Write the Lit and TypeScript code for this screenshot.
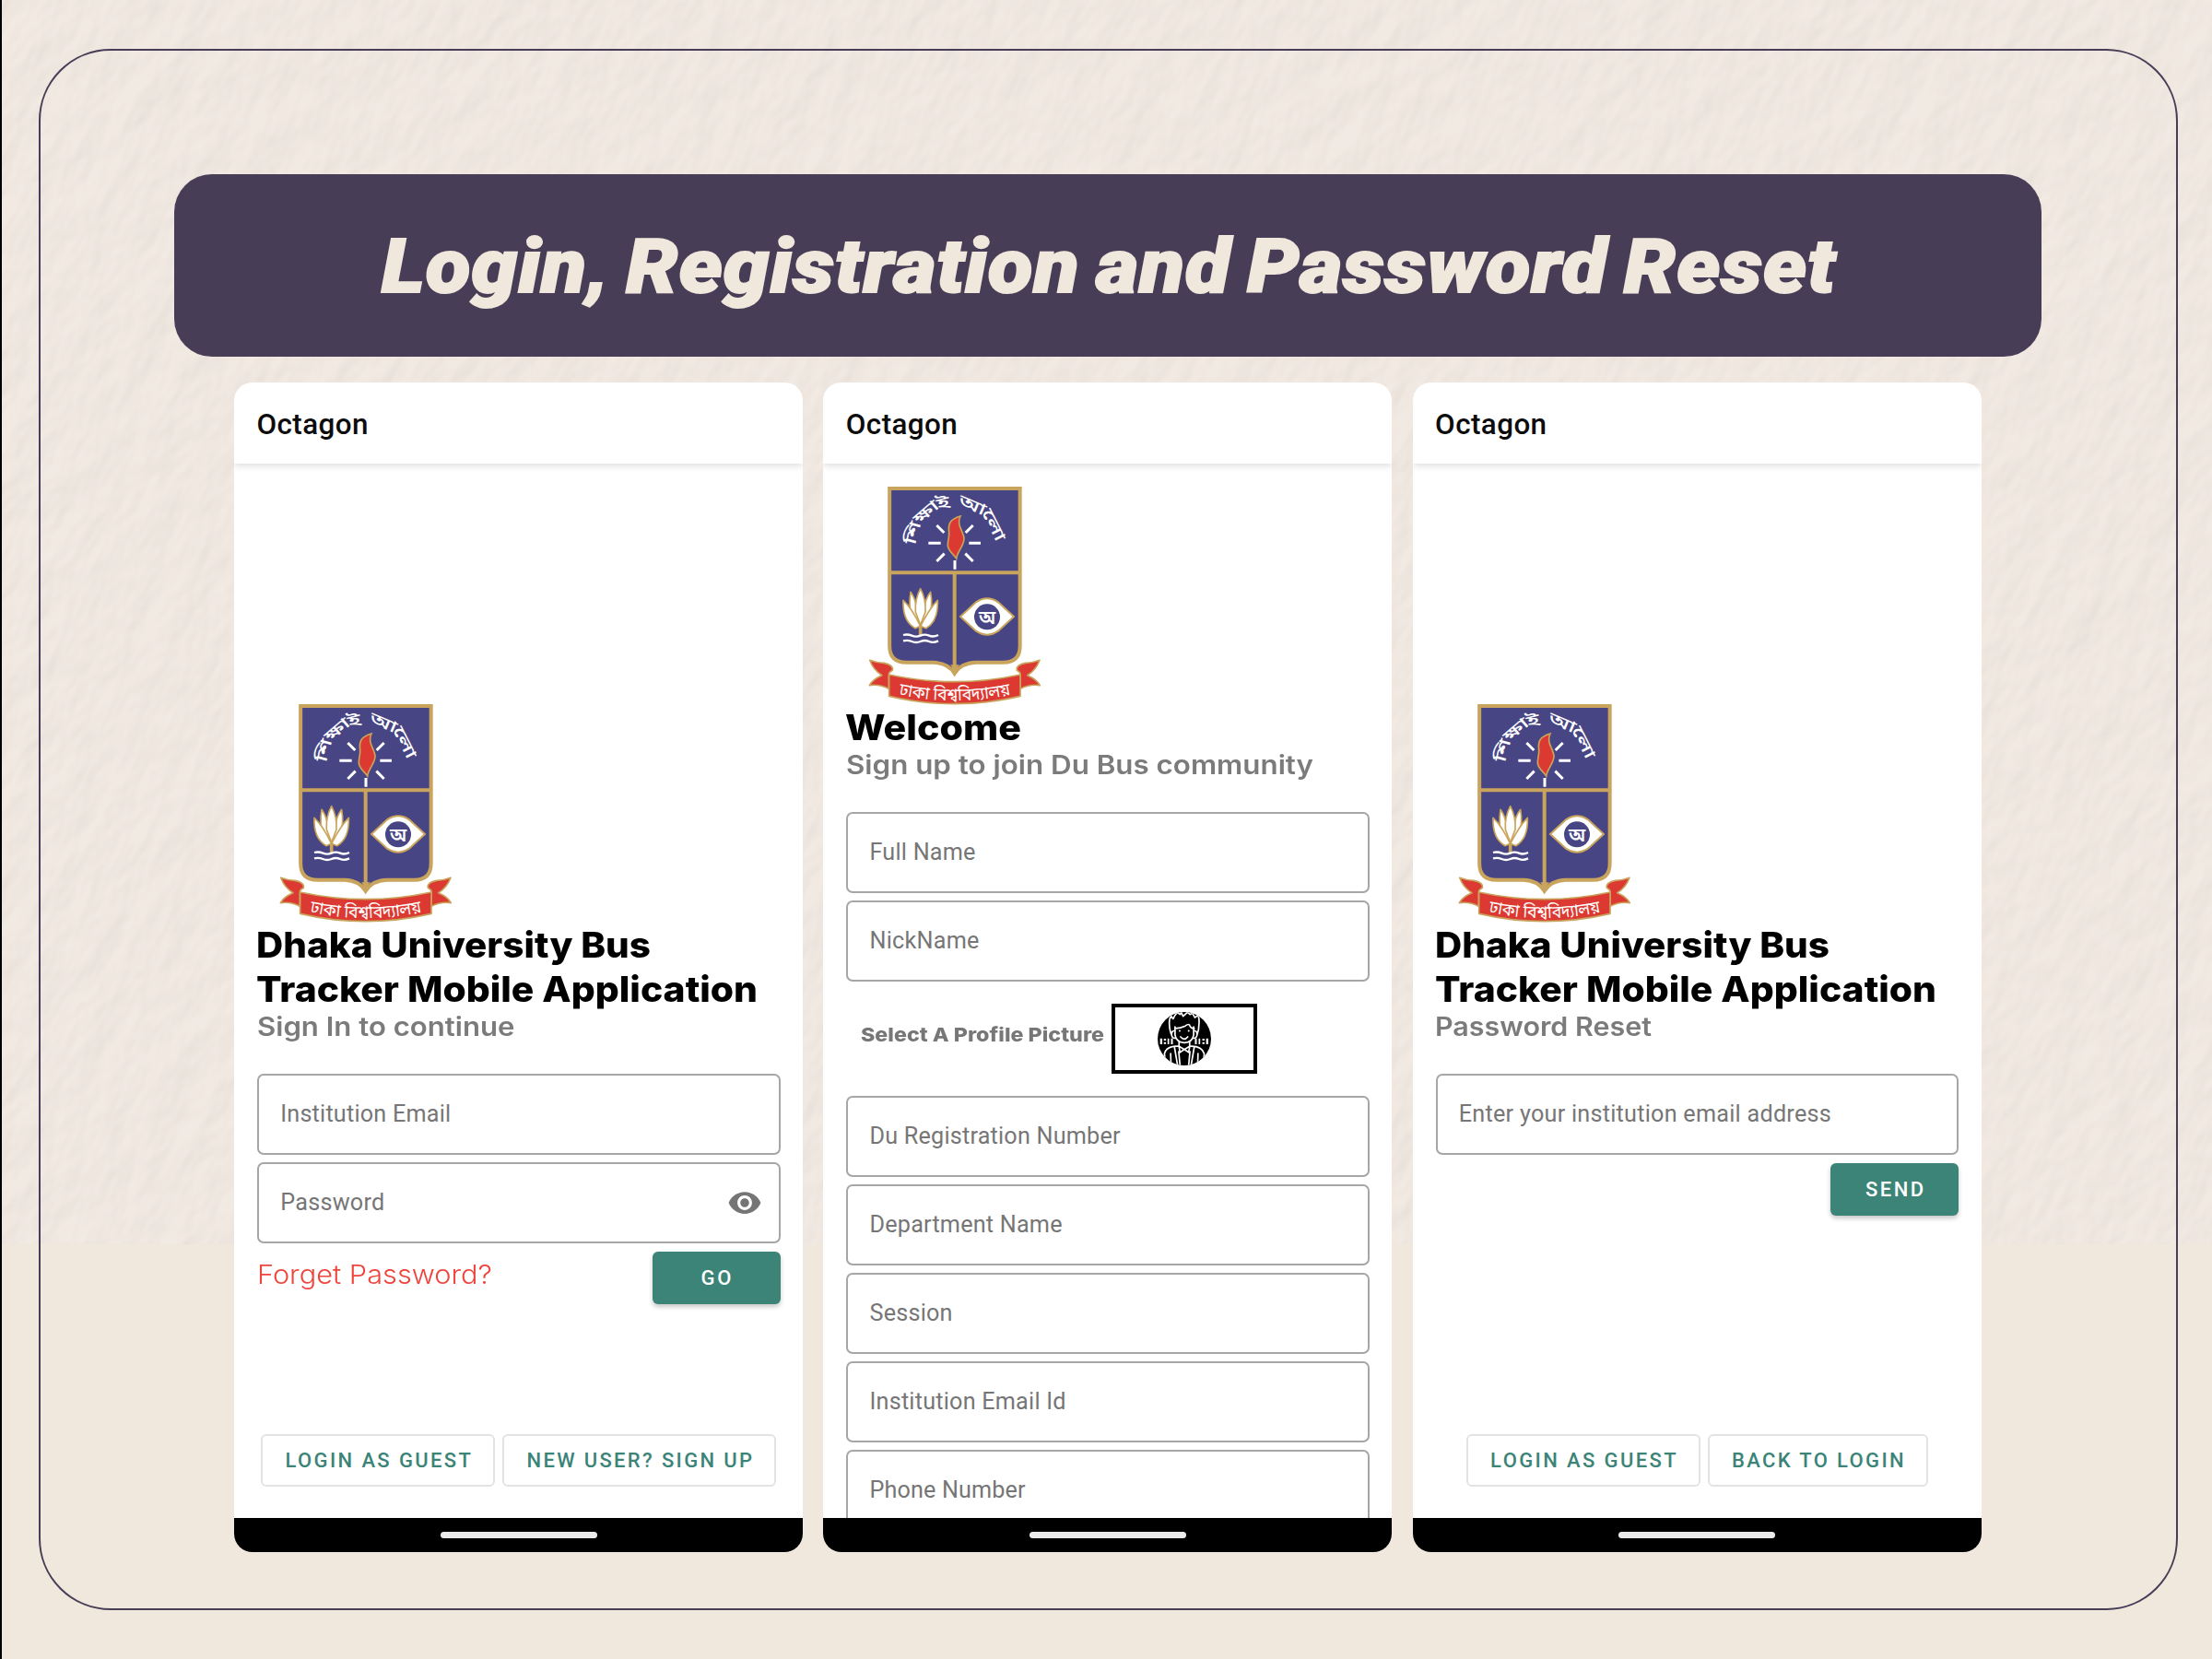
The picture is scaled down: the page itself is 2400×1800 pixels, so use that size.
import { LitElement, html, css, svg } from "lit";
import { customElement, property } from "lit/decorators.js";

/**
 * One line of text that fills a given width, either by tracking
 * or, with stretch set, by widening the letters themselves.
 */
@customElement("fit-line")
class FitLine extends LitElement {
  @property({ type: Number }) width = 100;
  @property() text = "";
  @property({ type: Boolean }) stretch = false;
  static styles = css`
    :host { display: block; white-space: pre; }
    .line { display: inline-block; transform-origin: 0 50%; }
  `;
  render() {
    return html`<span class="line">${this.text}</span>`;
  }
  updated() {
    const el = this.renderRoot.querySelector(".line") as HTMLElement;
    el.style.transform = "none";
    if (this.stretch) {
      const natural = el.getBoundingClientRect().width;
      el.style.transform = `scaleX(${(this.width / natural).toFixed(4)})`;
      return;
    }
    el.style.letterSpacing = "0px";
    const natural = el.getBoundingClientRect().width;
    const gap = (this.width - natural) / Math.max(1, this.text.length - 1);
    el.style.letterSpacing = `${gap.toFixed(3)}px`;
    el.style.marginRight = `${(-gap).toFixed(3)}px`;
  }
}

@customElement("du-crest")
class DuCrest extends LitElement {
  static styles = css`
    :host { display: block; }
    svg { display: block; width: 220px; height: 251px; overflow: visible; }
    .bn { font-family: "Noto Sans Bengali", "Noto Serif Bengali", "Noto Sans", sans-serif; fill: #fff; }
  `;
  render() {
    return html`<svg viewBox="0 0 660 753">
      <path d="M108.500 48H533V560Q533 614 478 614H390Q340 616 320 650Q300 616 252 614H164Q108.500 614 108.500 560Z" fill="#484584" stroke="#c9a45c" stroke-width="12"/>
      <path d="M107 322H534M320 322V640" stroke="#c9a45c" stroke-width="12" fill="none"/>
      <path d="M306 622Q316 632 320 660Q325 632 336 622Z" fill="#c9a45c"/>
      <path id="arc" d="M174 228A146 142 0 0 1 468 228" fill="none"/>
      <text class="bn" font-size="52" font-weight="500" dy="23" word-spacing="8"><textPath href="#arc" textLength="444" lengthAdjust="spacingAndGlyphs">শিক্ষাই আলো</textPath></text>
      <path d="M235 226H275M367 226H405M262 168L286 192M380 168L356 192M262 285L287 260M380 285L355 260M321 282V311" stroke="#fff" stroke-width="9" fill="none"/>
      <path d="M339 138C306 148 298 162 302 190C304 214 292 228 301 244C308 258 318 264 326 276C328 254 350 236 351 212C351 188 324 168 339 138Z" fill="#dc3932" stroke="#c9a45c" stroke-width="5"/>
      <g fill="#fff" stroke="#c9a45c" stroke-width="5" stroke-linejoin="round">
        <path d="M177 385Q170 430 180 462L209 500L238 462Q250 430 242 385Q226 405 222 435L209 470L196 435Q192 405 177 385Z"/>
        <path d="M209 374Q190 410 193 450L209 492L225 450Q228 410 209 374Z"/>
        <path d="M153 412Q150 480 192 503L209 496L227 503Q268 480 265 412Q240 436 209 496Q180 436 153 412Z"/>
      </g>
      <path d="M209 494V528" stroke="#c9a45c" stroke-width="11"/>
      <path d="M153 525Q167 521 181 527T209 527T237 527T267 525M153 544Q167 540 181 546T209 546T237 546T267 544" stroke="#fff" stroke-width="7" fill="none"/>
      <path d="M339 465L390 418Q426 394 462 418L513 465L462 512Q426 536 390 512Z" fill="#fff" stroke="#c9a45c" stroke-width="6"/>
      <circle cx="426" cy="466" r="42" fill="#484584"/>
      <text class="bn" x="426" y="489" font-size="60" font-weight="600" text-anchor="middle">অ</text>
      <g fill="#dc3932" stroke="#c9a45c" stroke-width="5" stroke-linejoin="round">
        <path d="M44 607Q66 616 90 616Q122 622 118 640Q104 648 106 656V700Q76 684 43 689Q52 670 84 656Q56 640 44 607Z"/>
        <path d="M597 607Q575 616 551 616Q519 622 523 640Q537 648 534 656V700Q565 684 598 689Q589 670 557 656Q585 640 597 607Z"/>
        <path d="M107 654Q320 700 534 654V724Q320 774 107 724Z"/>
      </g>
      <path id="rib" d="M138 719Q320 757 504 719" fill="none"/>
      <text class="bn" font-size="56" font-weight="400"><textPath href="#rib" textLength="368" lengthAdjust="spacingAndGlyphs">ঢাকা বিশ্ববিদ্যালয়</textPath></text>
    </svg>`;
  }
}

const eye = svg`<path d="M12 4.5C7 4.500 2.730 7.610 1 12c1.730 4.390 6 7.500 11 7.500s9.270-3.110 11-7.500c-1.730-4.390-6-7.500-11-7.500zM12 17c-2.760 0-5-2.240-5-5s2.240-5 5-5 5 2.240 5 5-2.240 5-5 5zm0-8c-1.660 0-3 1.340-3 3s1.340 3 3 3 3-1.340 3-3-1.340-3-3-3z" fill="#757575"/>`;

@customElement("app-root")
class AppRoot extends LitElement {
  static styles = css`
    :host { display: block; }
    * { box-sizing: border-box; }
    .slide { position: relative; width: 2400px; height: 1800px; overflow: hidden; background: #f0e8dc; padding: 189px 0 0 189px; }
    .paper { position: absolute; left: 0; top: 0; width: 2400px; height: 1350px; display: block; }
    .edge { position: absolute; left: 0; top: 0; width: 2px; height: 1800px; background: #000; }
    .frame { position: absolute; left: 42px; top: 53px; width: 2321px; height: 1694px; border: 2px solid #483d57; border-radius: 78px; }
    .banner { position: relative; width: 2026px; height: 197.500px; border-radius: 41px; background: #483d57; color: #f0e8dc; padding: 51px 0 0 225px; font: italic 900 81px/100px Roboto, sans-serif; letter-spacing: 1px; word-spacing: -5px; -webkit-text-stroke: 2px #f0e8dc; }
    .phones { position: relative; display: flex; gap: 22.300px; margin: 28.500px 0 0 65px; }
    .phone { width: 617px; height: 1269px; border-radius: 20px; background: #fff; overflow: hidden; display: flex; flex-direction: column; }
    .bar { flex: none; height: 88px; padding: 27px 25px 0 24.500px; font: 500 31.400px/38px Roboto, sans-serif; color: #0c0c0c; z-index: 1; background: #fff; box-shadow: 0 2px 8px rgba(0,0,0,.15); }
    .body { flex: 1; min-height: 0; overflow: hidden; padding: 247px 24.500px 34.500px 25px; display: flex; flex-direction: column; }
    .body > * { flex: none; }
    .body.top { padding-top: 11px; padding-bottom: 0; }
    .nav { flex: none; height: 37px; background: #000; display: flex; justify-content: center; align-items: center; padding-bottom: 1px; }
    .pill { width: 170px; height: 7px; border-radius: 3.500px; background: #ebebeb; }
    du-crest { margin-left: 11px; }
    .head { font: 800 38.500px/48px Inter, sans-serif; color: #000; margin: -.5px 0 .5px -1px; }
    .sub { font: 600 28px/34px Inter, sans-serif; color: #7b7b7b; margin-left: -.5px; }
    .fields { display: flex; flex-direction: column; gap: 8px; margin-top: 34px; }
    .fields.next { margin-top: 0; }
    .field { height: 88px; border: 2px solid #a6a6a6; border-radius: 7px; padding: 0 17.500px 0 23.200px; display: flex; align-items: center; justify-content: space-between; color: #767676; font: 400 25.200px/30px Roboto, sans-serif; }
    .eye { width: 38px; height: 38px; }
    .row { display: flex; justify-content: space-between; margin-top: 8.500px; }
    .row.end { justify-content: flex-end; }
    .forgot { font: 300 28px/34px Inter, sans-serif; color: #ee453d; padding: 8px 0 0 0; }
    .solid { width: 139px; height: 57.500px; border-radius: 6px; background: #3b8477; color: #fff; display: flex; justify-content: center; align-items: center; padding-top: 1px; font: 500 22px/30px Roboto, sans-serif; box-shadow: 0 3px 5px rgba(0,0,0,.22); }
    .links { margin-top: auto; display: flex; justify-content: center; gap: 8.500px; }
    .ghost { height: 57px; border: 2px solid #e3e3e3; border-radius: 6px; padding: 1px 24px 0; display: flex; align-items: center; color: #3b8477; font: 500 22px/30px Roboto, sans-serif; }
    .picture { height: 124px; display: flex; align-items: center; padding: 0 0 1px 16px; gap: 9px; }
    .pick { font: 800 20.500px/26px Inter, sans-serif; color: #777; padding-bottom: 7px; width: 262.500px; white-space: nowrap; }
    .thumb { width: 158px; height: 76px; border: 4px solid #000; display: flex; align-items: center; justify-content: center; }
    .thumb svg { width: 58px; height: 58px; }
  `;

  field(label: string, width: number, toggle = false) {
    return html`<div class="field"><fit-line .text=${label} .width=${width}></fit-line>${toggle
      ? html`<svg class="eye" viewBox="0 0 24 24">${eye}</svg>` : ""}</div>`;
  }
  ghost(label: string, width: number) {
    return html`<div class="ghost"><fit-line .text=${label} .width=${width}></fit-line></div>`;
  }
  phone(body: unknown, top = false) {
    return html`<section class="phone">
      <div class="bar"><fit-line text="Octagon" .width=${121}></fit-line></div>
      <div class="body ${top ? "top" : ""}"><du-crest></du-crest>${body}</div>
      <div class="nav"><div class="pill"></div></div>
    </section>`;
  }
  appName() {
    return html`<div class="head">
      <fit-line stretch text="Dhaka University Bus" .width=${428}></fit-line>
      <fit-line stretch text="Tracker Mobile Application" .width=${544}></fit-line>
    </div>`;
  }

  render() {
    return html`<main class="slide">
      <svg class="paper" viewBox="0 0 2400 1350">
        <defs>
          <filter id="grain" x="0" y="0" width="100%" height="100%" color-interpolation-filters="sRGB">
            <feTurbulence type="fractalNoise" baseFrequency="0.030 0.017" numOctaves="3" seed="8" result="n"/>
            <feDiffuseLighting in="n" surfaceScale="2.6" diffuseConstant="1.26" lighting-color="#f0e8e2">
              <feDistantLight azimuth="210" elevation="50"/>
            </feDiffuseLighting>
          </filter>
        </defs>
        <rect width="2400" height="1350" fill="#f0e8e1"/>
        <g opacity=".12"><rect x="-1200" y="-1200" width="4800" height="3900" filter="url(#grain)" transform="rotate(25 1200 675)"/></g>
      </svg>
      <div class="edge"></div>
      <div class="frame"></div>
      <header class="banner"><fit-line stretch text="Login, Registration and Password Reset" .width=${1578}></fit-line></header>
      <div class="phones">
        ${this.phone(html`
          ${this.appName()}
          <div class="sub"><fit-line stretch text="Sign In to continue" .width=${279.5}></fit-line></div>
          <div class="fields">${this.field("Institution Email", 185)}${this.field("Password", 113, true)}</div>
          <div class="row">
            <div class="forgot"><fit-line stretch text="Forget Password?" .width=${255}></fit-line></div>
            <div class="solid"><fit-line text="GO" .width=${33}></fit-line></div>
          </div>
          <div class="links">${this.ghost("LOGIN AS GUEST", 201.5)}${this.ghost("NEW USER? SIGN UP", 244.5)}</div>`)}
        ${this.phone(html`
          <div class="head"><fit-line stretch text="Welcome" .width=${191}></fit-line></div>
          <div class="sub"><fit-line stretch text="Sign up to join Du Bus community" .width=${507}></fit-line></div>
          <div class="fields">${this.field("Full Name", 115)}${this.field("NickName", 119)}</div>
          <div class="picture">
            <div class="pick"><fit-line stretch text="Select A Profile Picture" .width=${264}></fit-line></div>
            <div class="thumb"><svg viewBox="48 54 172 172">
              <defs><clipPath id="disc"><circle cx="134" cy="140" r="86"/></clipPath></defs>
              <circle cx="134" cy="140" r="86"/>
              <g clip-path="url(#disc)" fill="none" stroke="#fff" stroke-width="5" stroke-linejoin="round" stroke-linecap="round">
                <path d="M91 124Q84 100 86 84Q85 74 92 68L98 76Q104 62 112 56L120 62L124 56L130 68L144 55L152 62L160 58L168 72L178 64Q183 78 181 94Q181 110 176 124"/>
                <path d="M104 107Q122 106 137 99Q146 92 150 95Q154 108 166 107M104 102V128Q108 152 134 153Q160 152 164 128V102"/>
                <path d="M103 114Q92 114 93 128Q95 140 106 138M165 114Q176 114 175 128Q173 140 162 138"/>
                <path d="M122 134Q134 148 145 134"/>
                <path d="M117 150V164L134 175L151 164V150M117 166L120 184L134 174L148 184L151 166"/>
                <path d="M116 164Q76 162 70 188L73 222M152 164Q190 162 198 188L195 222M102 166L112 224M116 182L120 224M166 166L156 224M152 182L148 224M90 188L91 222M178 188L177 222"/>
              </g>
              <g fill="#fff"><circle cx="119" cy="115" r="3"/><circle cx="148" cy="115" r="3"/>
                <path d="M56 139h7v19h-7zM68 140h7v6h-7zM68 151h7v6h-7zM80 139h5v19h-5zM91 139h6v19h-6zM168 139h6v19h-6zM180 139h5v19h-5zM192 140h7v6h-7zM192 151h7v6h-7zM204 139h7v19h-7z"/></g>
            </svg></div>
          </div>
          <div class="fields next">${this.field("Du Registration Number", 272)}${this.field("Department Name", 209)}${this.field("Session", 90)}${this.field("Institution Email Id", 213)}${this.field("Phone Number", 169)}</div>`, true)}
        ${this.phone(html`
          ${this.appName()}
          <div class="sub"><fit-line stretch text="Password Reset" .width=${235}></fit-line></div>
          <div class="fields">${this.field("Enter your institution email address", 404)}</div>
          <div class="row end"><div class="solid"><fit-line text="SEND" .width=${63}></fit-line></div></div>
          <div class="links">${this.ghost("LOGIN AS GUEST", 201.5)}${this.ghost("BACK TO LOGIN", 186.5)}</div>`)}
      </div>
    </main>`;
  }
}
